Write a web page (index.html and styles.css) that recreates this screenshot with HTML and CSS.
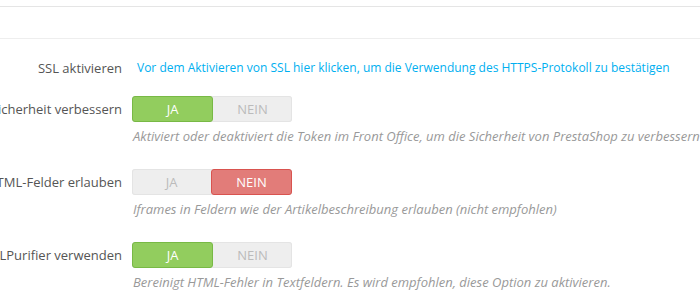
FILE: index.html
```html
<!DOCTYPE html>
<html lang="de">
<head>
<meta charset="utf-8">
<title>Allgemein</title>
<link rel="stylesheet" href="styles.css">
</head>
<body>
<div class="heading"></div>
<div class="form">
  <div class="row row-ssl">
    <div class="label"><span>SSL aktivieren</span></div>
    <div class="content"><a class="link" href="#">Vor dem Aktivieren von SSL hier klicken, um die Verwendung des HTTPS-Protokoll zu bestätigen</a></div>
  </div>
  <div class="row">
    <div class="label"><span>Front-Office-Sicherheit verbessern</span></div>
    <div class="content">
      <div class="switch">
        <span class="opt on-yes">JA</span>
        <span class="opt">NEIN</span>
      </div>
      <p class="help">Aktiviert oder deaktiviert die Token im Front Office, um die Sicherheit von PrestaShop zu verbessern</p>
    </div>
  </div>
  <div class="row">
    <div class="label"><span>HTML-Felder erlauben</span></div>
    <div class="content">
      <div class="switch">
        <span class="opt">JA</span>
        <span class="opt on-no">NEIN</span>
      </div>
      <p class="help">Iframes in Feldern wie der Artikelbeschreibung erlauben (nicht empfohlen)</p>
    </div>
  </div>
  <div class="row">
    <div class="label"><span>HTMLPurifier verwenden</span></div>
    <div class="content">
      <div class="switch">
        <span class="opt on-yes">JA</span>
        <span class="opt">NEIN</span>
      </div>
      <p class="help">Bereinigt HTML-Fehler in Textfeldern. Es wird empfohlen, diese Option zu aktivieren.</p>
    </div>
  </div>
</div>
</body>
</html>
```
FILE: styles.css
```css
html, body {
  margin: 0;
  padding: 0;
  background: #fff;
  font-family: "Open Sans", "Liberation Sans", sans-serif;
  color: #555;
  overflow: hidden;
}

.heading {
  margin-top: 6px;
  height: 31px;
  border-top: 1px solid #e5e5e5;
  border-bottom: 1px solid #eeeeee;
}

.form {
  padding-top: 20px;
}

.row {
  display: grid;
  grid-template-columns: 122px 1fr;
  column-gap: 10px;
  margin-bottom: 24px;
}

.row-ssl {
  margin-bottom: 19px;
}

.label {
  display: flex;
  justify-content: flex-end;
  white-space: nowrap;
  font-size: 13px;
  line-height: 26px;
  height: 26px;
  color: #555;
}

.row-ssl .label {
  line-height: 18px;
  height: 18px;
}

.content {
  min-width: 0;
}

.link {
  display: block;
  margin-left: 5px;
  font-size: 12px;
  line-height: 18px;
  color: #00aff0;
  text-decoration: none;
  white-space: nowrap;
}

.switch {
  display: flex;
  width: 160px;
  height: 26px;
  border-radius: 3px;
  background: #eeeeee;
  box-shadow: inset 0 0 0 1px #e4e4e4;
}

.opt {
  flex: 1;
  display: flex;
  align-items: center;
  justify-content: center;
  font-size: 13px;
  color: #bbbbbb;
  box-sizing: border-box;
  border-radius: 3px;
}

.on-yes {
  background: #92cd5e;
  border: 1px solid #78b945;
  color: #fff;
}

.on-no {
  background: #e27c79;
  border: 1px solid #d9534f;
  color: #fff;
}

.help {
  margin: 5px 0 0 1px;
  font-size: 13px;
  line-height: 18px;
  font-style: italic;
  color: #999;
  white-space: nowrap;
}
```
